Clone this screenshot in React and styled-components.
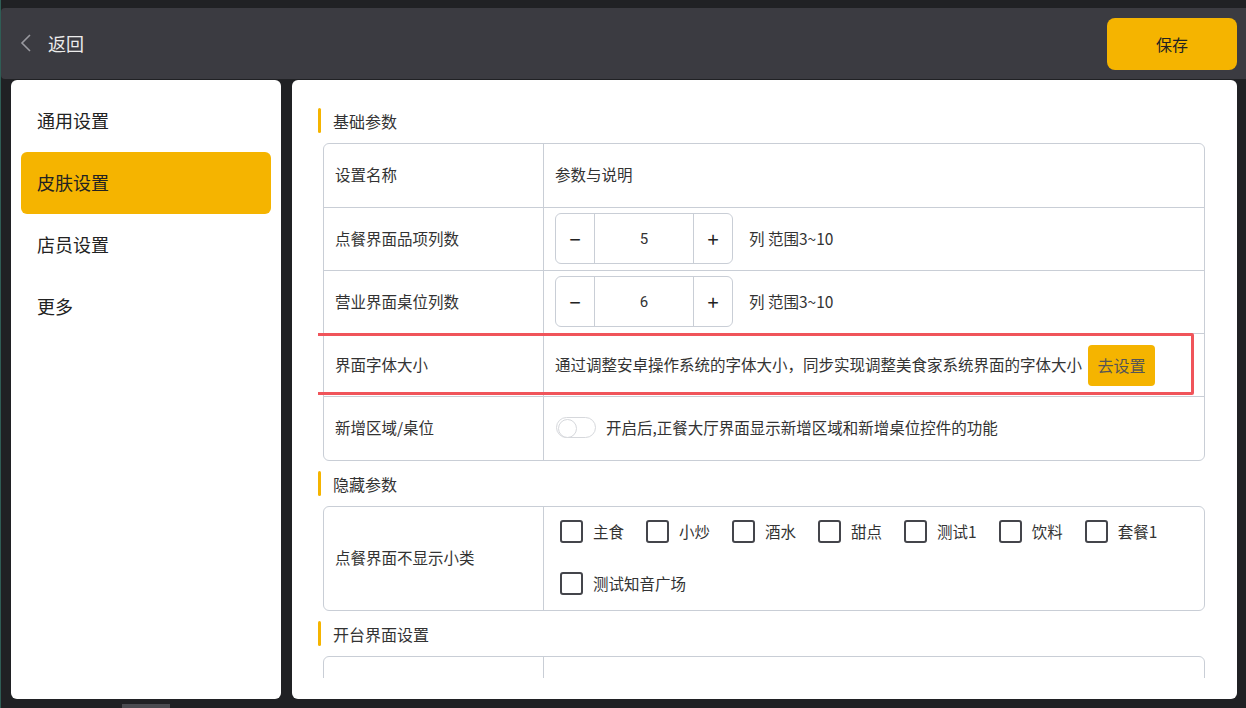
import React from 'react'
import styled, { createGlobalStyle } from 'styled-components';

const GlobalStyle = createGlobalStyle`
  html, body {
    margin: 0;
    padding: 0;
    background: #202124;
    font-family: "Noto Sans CJK SC", "Noto Sans", Roboto, sans-serif;
  }
  * { box-sizing: border-box; }
`;

const Page = styled.div`
  width: 1246px;
  height: 708px;
  padding-top: 8px;
  display: flex;
  flex-direction: column;
  background: #202124;
  border-left: 1px solid #2f5d55;
  overflow: hidden;
`;

const Header = styled.div`
  height: 71px;
  flex-shrink: 0;
  background: #3b3b41;
  border-radius: 4px 0 0 4px;
  display: flex;
  align-items: center;
  justify-content: space-between;
  padding: 0 9px 0 19px;
`;

const Back = styled.div`
  display: flex;
  align-items: center;
  gap: 16px;
  color: #ececec;
  font-size: 18px;
  margin-top: -2px;
`;

const SaveButton = styled.button`
  width: 130px;
  height: 52px;
  border: none;
  border-radius: 8px;
  background: #f5b400;
  color: #222;
  font-family: inherit;
  font-size: 16px;
`;

const Main = styled.div`
  display: flex;
  gap: 11px;
  padding: 1px 9px 0 10px;
  height: 620px;
`;

const Sidebar = styled.div`
  width: 270px;
  background: #fff;
  border-radius: 6px;
  padding: 10px 10px;
  display: flex;
  flex-direction: column;
`;

const MenuItem = styled.div`
  height: 62px;
  display: flex;
  align-items: center;
  padding-left: 16px;
  padding-bottom: 2px;
  border-radius: 6px;
  font-size: 18px;
  color: #222;
  background: ${({ $active }) => ($active ? '#f5b400' : 'transparent')};
`;

const Content = styled.div`
  flex: 1;
  background: #fff;
  border-radius: 6px;
  padding: 28px 32px 0 26px;
  overflow: hidden;
`;

const Scroll = styled.div`
  height: 570px;
  overflow: hidden;
`;

const SectionTitle = styled.div`
  height: 25px;
  display: flex;
  align-items: center;
  gap: 12px;
  font-size: 16px;
  color: #333;
  margin-bottom: 10px;
  &::before {
    content: '';
    width: 3px;
    height: 25px;
    border-radius: 2px;
    background: #f5b400;
  }
`;

const Table = styled.div`
  margin-left: 5px;
  border: 1px solid #c9ced6;
  border-radius: 6px;
  margin-bottom: 10px;
`;

const Row = styled.div`
  display: grid;
  grid-template-columns: 220px 1fr;
  min-height: ${({ $h }) => $h || 63}px;
  border-top: ${({ $first }) => ($first ? 'none' : '1px solid #c9ced6')};
  position: relative;
`;

const NameCell = styled.div`
  display: flex;
  align-items: center;
  padding: 0 0 3px 11px;
  font-size: 15.5px;
  color: #333;
  border-right: 1px solid #c9ced6;
`;

const ValueCell = styled.div`
  display: flex;
  align-items: center;
  padding: 0 0 3px 11px;
  font-size: 15.5px;
  color: #333;
  gap: 16px;
`;

const Stepper = styled.div`
  display: flex;
  width: 178px;
  height: 51px;
  border: 1px solid #c9ced6;
  border-radius: 6px;
  margin-top: 2px;
`;

const StepBtn = styled.div`
  width: 39px;
  display: flex;
  align-items: center;
  justify-content: center;
  font-size: 20px;
  color: #222;
  border-left: ${({ $side }) => ($side === 'right' ? '1px solid #c9ced6' : 'none')};
  border-right: ${({ $side }) => ($side === 'left' ? '1px solid #c9ced6' : 'none')};
`;

const StepValue = styled.div`
  flex: 1;
  display: flex;
  align-items: center;
  justify-content: center;
  font-size: 15px;
  font-family: Roboto, sans-serif;
`;

const Highlight = styled.div`
  position: absolute;
  left: -9px;
  top: -1px;
  width: 879px;
  height: 62px;
  border: 3px solid #f0545a;
  border-radius: 2px;
  pointer-events: none;
`;

const GoButton = styled.button`
  height: 41px;
  width: 67px;
  border: none;
  border-radius: 4px;
  background: #f5b400;
  color: #555;
  font-family: inherit;
  font-size: 16px;
  margin-left: -10px;
  margin-top: 3px;
`;

const Toggle = styled.div`
  width: 40px;
  height: 21px;
  border-radius: 11px;
  border: 1px solid #d6d8dc;
  background: #fff;
  position: relative;
  margin-left: 1px;
  margin-right: -6px;
  &::after {
    content: '';
    position: absolute;
    left: 1px;
    top: 1px;
    width: 17px;
    height: 17px;
    border-radius: 50%;
    border: 1px solid #d6d8dc;
    background: #fff;
  }
`;

const CheckGrid = styled.div`
  display: flex;
  flex-wrap: wrap;
  align-content: flex-start;
  padding: 13px 0 0 16px;
  row-gap: 30px;
  min-height: 103px;
`;

const CheckItem = styled.div`
  display: flex;
  align-items: center;
  gap: 10px;
  margin-right: 22px;
  font-size: 15.5px;
  color: #333;
  height: 22px;
`;

const Box = styled.span`
  width: 23px;
  height: 23px;
  border: 2px solid #44454b;
  border-radius: 3px;
`;

const ScrollThumb = styled.div`
  width: 48px;
  height: 4px;
  background: #4a4b50;
  margin: 5px 0 0 121px;
`;

const items = ['主食', '小炒', '酒水', '甜点', '测试1', '饮料', '套餐1', '测试知音广场'];

export default function App() {
  return (
    <Page>
      <GlobalStyle />
      <Header>
        <Back>
          <svg width="12" height="20" viewBox="0 0 12 20" fill="none">
            <path d="M10 2 L2 10 L10 18" stroke="#9a9aa0" strokeWidth="1.6" />
          </svg>
          返回
        </Back>
        <SaveButton>保存</SaveButton>
      </Header>
      <Main>
        <Sidebar>
          <MenuItem>通用设置</MenuItem>
          <MenuItem $active>皮肤设置</MenuItem>
          <MenuItem>店员设置</MenuItem>
          <MenuItem>更多</MenuItem>
        </Sidebar>
        <Content>
          <Scroll>
            <SectionTitle>基础参数</SectionTitle>
            <Table>
              <Row $first>
                <NameCell>设置名称</NameCell>
                <ValueCell>参数与说明</ValueCell>
              </Row>
              <Row>
                <NameCell>点餐界面品项列数</NameCell>
                <ValueCell>
                  <Stepper>
                    <StepBtn $side="left">−</StepBtn>
                    <StepValue>5</StepValue>
                    <StepBtn $side="right">+</StepBtn>
                  </Stepper>
                  列 范围3~10
                </ValueCell>
              </Row>
              <Row>
                <NameCell>营业界面桌位列数</NameCell>
                <ValueCell>
                  <Stepper>
                    <StepBtn $side="left">−</StepBtn>
                    <StepValue>6</StepValue>
                    <StepBtn $side="right">+</StepBtn>
                  </Stepper>
                  列 范围3~10
                </ValueCell>
              </Row>
              <Row>
                <NameCell>界面字体大小</NameCell>
                <ValueCell>
                  通过调整安卓操作系统的字体大小，同步实现调整美食家系统界面的字体大小
                  <GoButton>去设置</GoButton>
                </ValueCell>
                <Highlight />
              </Row>
              <Row $h={64}>
                <NameCell>新增区域/桌位</NameCell>
                <ValueCell>
                  <Toggle />
                  开启后,正餐大厅界面显示新增区域和新增桌位控件的功能
                </ValueCell>
              </Row>
            </Table>
            <SectionTitle>隐藏参数</SectionTitle>
            <Table>
              <Row $first $h={103}>
                <NameCell>点餐界面不显示小类</NameCell>
                <div>
                  <CheckGrid>
                    {items.map((t) => (
                      <CheckItem key={t}>
                        <Box />
                        {t}
                      </CheckItem>
                    ))}
                  </CheckGrid>
                </div>
              </Row>
            </Table>
            <SectionTitle>开台界面设置</SectionTitle>
            <Table>
              <Row $first $h={63}>
                <NameCell />
                <ValueCell />
              </Row>
            </Table>
          </Scroll>
        </Content>
      </Main>
      <ScrollThumb />
    </Page>
  );
}
